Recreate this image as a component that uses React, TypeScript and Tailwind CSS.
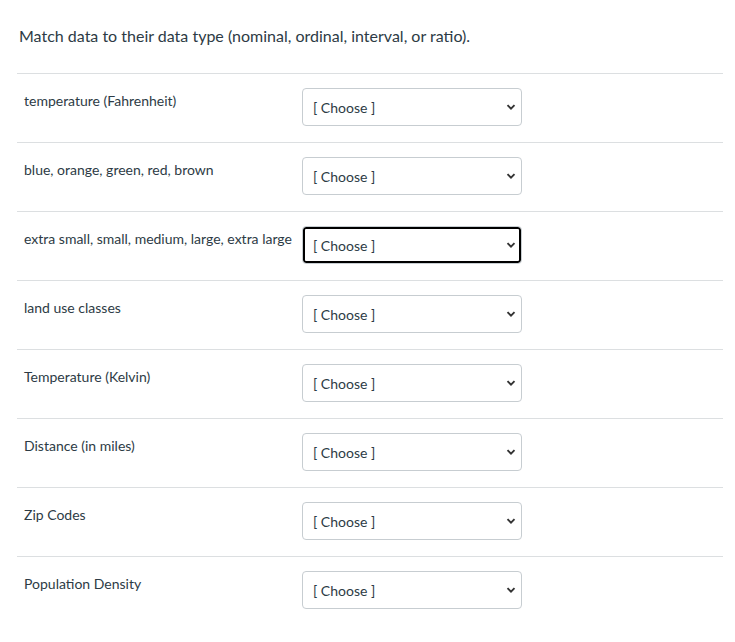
import React from 'react'

const items = [
  'temperature (Fahrenheit)',
  'blue, orange, green, red, brown',
  'extra small, small, medium, large, extra large',
  'land use classes',
  'Temperature (Kelvin)',
  'Distance (in miles)',
  'Zip Codes',
  'Population Density',
]

function ChooseSelect({ focused }: { focused?: boolean }) {
  return (
    <div className="relative w-[220px] h-[38px]">
      <select
        defaultValue=""
        className={`appearance-none w-full h-full bg-white border border-[#c7cdd1] rounded-[4px] pl-[10px] pr-8 text-[14px] text-[#2d3b45] outline-none ${
          focused ? 'ring-2 ring-inset ring-black' : ''
        }`}
      >
        <option value="">[ Choose ]</option>
        <option value="nominal">nominal</option>
        <option value="ordinal">ordinal</option>
        <option value="interval">interval</option>
        <option value="ratio">ratio</option>
      </select>
      <svg
        className="pointer-events-none absolute right-[6px] top-1/2 -translate-y-1/2"
        width="10"
        height="8"
        viewBox="0 0 10 8"
      >
        <path d="M1.5 2.2 L5 5.7 L8.5 2.2" fill="none" stroke="#333" strokeWidth="1.9" />
      </svg>
    </div>
  )
}

export default function App() {
  return (
    <div
      className="min-h-screen bg-white pl-[17px] w-[723px]"
      style={{ fontFamily: 'Lato, "Noto Sans", sans-serif' }}
    >
      <h2 className="pt-[24px] pl-[2px] text-[16px] leading-[24px] text-[#2d3b45] font-normal mb-[25px]">
        Match data to their data type (nominal, ordinal, interval, or ratio).
      </h2>
      <div>
        {items.map((label, i) => (
          <div key={label} className="flex border-t border-[#dcdfe1] h-[69px]">
            <div className="w-[285px] pl-[7px] pt-[17px] text-[14px] leading-[20px] text-[#2d3b45] whitespace-nowrap">
              {label}
            </div>
            <div className="pt-[14px]">
              <ChooseSelect focused={i === 2} />
            </div>
          </div>
        ))}
      </div>
    </div>
  )
}
